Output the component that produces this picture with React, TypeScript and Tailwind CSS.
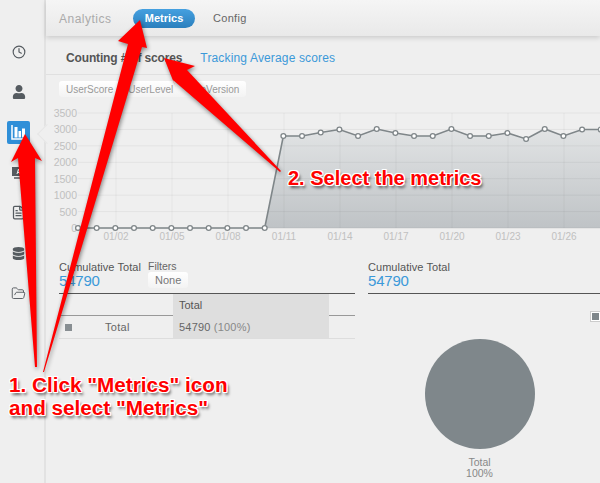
import { Clock, FileText, FolderOpen } from "lucide-react";
import { FaDatabase, FaUser } from "react-icons/fa";

const sans = "font-['Liberation_Sans',Arial,sans-serif]";
const outline =
  "[text-shadow:1px_0_0_#fff,-1px_0_0_#fff,0_1px_0_#fff,0_-1px_0_#fff,1px_1px_0_#fff,-1px_-1px_0_#fff,1px_-1px_0_#fff,-1px_1px_0_#fff,2px_3px_3px_rgba(0,0,0,0.6)]";

const yTicks = [3500, 3000, 2500, 2000, 1500, 1000, 500, 0];
const xTicks = ["01/02", "01/05", "01/08", "01/11", "01/14", "01/17", "01/20", "01/23", "01/26"];
const values = [
  228, 228, 228, 228, 228, 228, 228, 228, 228, 228, 228, 136, 136, 132.5, 129.5, 136, 129, 133, 136, 136, 129, 136,
  136, 133, 139, 129, 136, 129.5, 129.5, 127,
];

const MetricsChart = () => {
  const pts = values.map((y, i) => [78 + i * 18.67, y]);
  const line = pts.map((p) => p.join(",")).join(" ");
  return (
    <svg viewBox="46 100 554 145" className="block h-[145px] w-full">
      <defs>
        <linearGradient id="area" x1="0" y1="0" x2="0" y2="1">
          <stop offset="0" stopColor="#e2e4e5" />
          <stop offset="1" stopColor="#bfc3c6" />
        </linearGradient>
      </defs>
      <polygon points={`265,228 ${line.split(" ").slice(10).join(" ")} 620,228`} fill="url(#area)" />
      {yTicks.map((t, i) => (
        <g key={t}>
          <line x1="78" x2="600" y1={113 + i * 16.43} y2={113 + i * 16.43} stroke="#000" strokeOpacity="0.05" />
          <text x="77" y={117 + i * 16.43} textAnchor="end" fontSize="10.5" fill="#c0c0c0">
            {t}
          </text>
        </g>
      ))}
      {xTicks.map((t, i) => (
        <g key={t}>
          <line x1={116 + i * 56} x2={116 + i * 56} y1="113" y2="228" stroke="#000" strokeOpacity="0.04" />
          <text x={116 + i * 56} y="240" textAnchor="middle" fontSize="10" fill="#c0c0c0">
            {t}
          </text>
        </g>
      ))}
      <line x1="78" x2="600" y1="228.5" y2="228.5" stroke="#e4e4e4" />
      <polyline points={line} fill="none" stroke="#7f8689" strokeWidth="1.6" />
      {pts.map(([x, y]) => (
        <circle key={x} cx={x} cy={y} r="2.4" fill="#fff" stroke="#7f8689" strokeWidth="1.3" />
      ))}
    </svg>
  );
};

const Total = () => (
  <div className="flex flex-col">
    <div className="text-[11px] leading-3 tracking-[0.05px] text-[#555]">Cumulative Total</div>
    <div className="text-[15px] leading-[16px] tracking-[-0.2px] text-[#3b99d9]">54790</div>
  </div>
);

export default function App() {
  return (
    <div className={`relative flex h-[483px] w-[600px] overflow-hidden bg-[#efefef] ${sans}`}>
      <aside className="flex w-[46px] shrink-0 flex-col border-r-2 border-[#e2e2e2] pt-[32px] text-[#555b60]">
        <div className="flex h-[40.2px] w-[37px] items-center justify-center">
          <Clock size={14} strokeWidth={2} />
        </div>
        <div className="flex h-[40.2px] w-[37px] items-center justify-center">
          <FaUser size={14} />
        </div>
        <div className="flex h-[40.2px] w-[37px] items-center justify-center">
          <div className="flex h-[23px] w-[23px] items-center justify-center rounded-[2px] bg-[#2f8fd8]">
            <svg width="15" height="15" viewBox="0 0 15 15" fill="none">
              <path d="M1 0v14h14" stroke="#fff" strokeWidth="1.5" />
              <path d="M3.500 2h3v10.500h-3zM7.500 6h2.500v6.500H7.500zM11 3.500h3v9h-3z" fill="#fff" />
            </svg>
          </div>
        </div>
        <div className="flex h-[40.2px] w-[37px] items-center justify-center">
          <svg width="15" height="15" viewBox="0 0 15 15">
            <rect x="1" y="2" width="13" height="9" fill="#555b60" />
            <path d="M6 9l1.500-5 1.500 5M6.500 7.500h2" stroke="#fff" fill="none" />
            <path d="M3 13h9" stroke="#555b60" strokeWidth="1.500" />
          </svg>
        </div>
        <div className="flex h-[40.2px] w-[37px] items-center justify-center">
          <FileText size={15} strokeWidth={2} />
        </div>
        <div className="flex h-[40.2px] w-[37px] items-center justify-center">
          <FaDatabase size={13} />
        </div>
        <div className="flex h-[40.2px] w-[37px] items-center justify-center">
          <FolderOpen size={15} strokeWidth={1.5} />
        </div>
      </aside>
      <div className="absolute top-[126.500px] left-[40px] h-[14px] w-[14px] rotate-45 border-b border-l border-[#e6e6e6] bg-[#efefef]" />

      <main className="flex min-w-0 flex-1 flex-col">
        <div className="flex h-[36px] shrink-0 items-center bg-linear-to-b from-[#f5f5f5] to-[#e9e9e9] pt-[1px] pr-4 pl-[13px] shadow-[0_2px_5px_rgba(0,0,0,0.15)]">
          <span className="w-[74px] text-[12px] tracking-[0.5px] text-[#aaaaaa]">Analytics</span>
          <span className="flex h-[19px] w-[62px] items-center justify-center rounded-full bg-linear-to-b from-[#45a0e0] to-[#2a7fbd] text-[11px] font-bold text-white">
            Metrics
          </span>
          <span className="ml-[18px] text-[11px] tracking-[0.3px] text-[#666]">Config</span>
        </div>

        <div className="flex h-[39px] shrink-0 items-center gap-[18px] border-b border-[#e0e0e0] pt-[5px] pl-[20px] text-[12px]">
          <span className="font-bold tracking-[-0.15px] text-[#555]">Counting # of scores</span>
          <span className="tracking-[0.15px] text-[#3b99d9]">Tracking Average scores</span>
        </div>

        <div className="mt-[6px] ml-[13px] flex h-[16px] w-[187px] items-center gap-[15px] rounded-[3px] bg-linear-to-b from-white to-[#f3f3f3] pt-[1px] pl-[7px] text-[10px] text-[#999]">
          <span>UserScore</span>
          <span>UserLevel</span>
          <span>AppVersion</span>
        </div>

        <div className="mt-[3px]">
          <MetricsChart />
        </div>

        <div className="mt-[15px] grid grid-cols-[296px_1fr] gap-[13px] pl-[13px]">
          <section>
            <div className="relative h-[34px] border-b border-[#555] pt-[1px]">
              <Total />
              <div className="absolute top-[0px] left-[89px] flex flex-col items-start">
                <span className="text-[10.500px] leading-3 text-[#666]">Filters</span>
                <span className="rounded-[3px] bg-linear-to-b from-white to-[#f3f3f3] px-[7px] text-[11px] leading-4 text-[#777]">
                  None
                </span>
              </div>
            </div>
            <div className="grid h-[22px] grid-cols-[114px_156px_1fr] border-b border-[#999]">
              <div />
              <div className="bg-[#dedede] pl-[6px] text-[11px] leading-[22px] text-[#555]">Total</div>
            </div>
            <div className="grid h-[23px] grid-cols-[114px_156px_1fr] border-b border-[#dddddd] text-[11px] leading-[22px] text-[#666]">
              <div className="flex items-center pl-[6px]">
                <span className="h-[7px] w-[7px] bg-[#888e92]" />
                <span className="ml-[33px] tracking-[0.3px]">Total</span>
              </div>
              <div className="bg-[#dedede] pl-[6px] tracking-[0.2px]">
                54790 <span className="text-[#888]">(100%)</span>
              </div>
            </div>
          </section>

          <section className="flex flex-col">
            <div className="h-[34px] border-b border-[#555] pt-[1px]">
              <Total />
            </div>
            <div className="mt-[18px] flex justify-end">
              <div className="h-[9px] w-[9px] border border-white bg-[#7f878b] outline outline-[#cccccc]" />
            </div>
            <div className="mt-[18px] mr-[9px] flex flex-col items-center self-center">
              <div className="h-[110px] w-[110px] rounded-full bg-[#7f878b]" />
              <div className="mt-[8px] text-center text-[10.500px] leading-[11px] text-[#888]">
                Total
                <br />
                100%
              </div>
            </div>
          </section>
        </div>
      </main>

      <svg
        viewBox="0 0 600 483"
        className="pointer-events-none absolute top-0 left-0 h-[483px] w-[600px] drop-shadow-[1px_2px_2px_rgba(0,0,0,0.45)]"
      >
        <polygon points="25,134 42,161 35,158 37,367 35,367 18,158 11,162" fill="#ff0000" />
        <polygon points="140,20 147,48 142,47 44,372 43,372 128,44 118,41" fill="#ff0000" />
        <polygon points="164,58 195,66 187,70 281,171 280,172 173,80 176,88" fill="#ff0000" />
      </svg>

      <div
        className={`absolute top-[166px] left-[288px] text-[20px] leading-[24px] font-bold whitespace-nowrap text-[#ff0000] ${outline}`}
      >
        2. Select the metrics
      </div>
      <div
        className={`absolute top-[373px] left-[9px] text-[20.700px] leading-[23px] font-bold whitespace-nowrap text-[#ff0000] ${outline}`}
      >
        1. Click "Metrics" icon
        <br />
        and select "Metrics"
      </div>
    </div>
  );
}
